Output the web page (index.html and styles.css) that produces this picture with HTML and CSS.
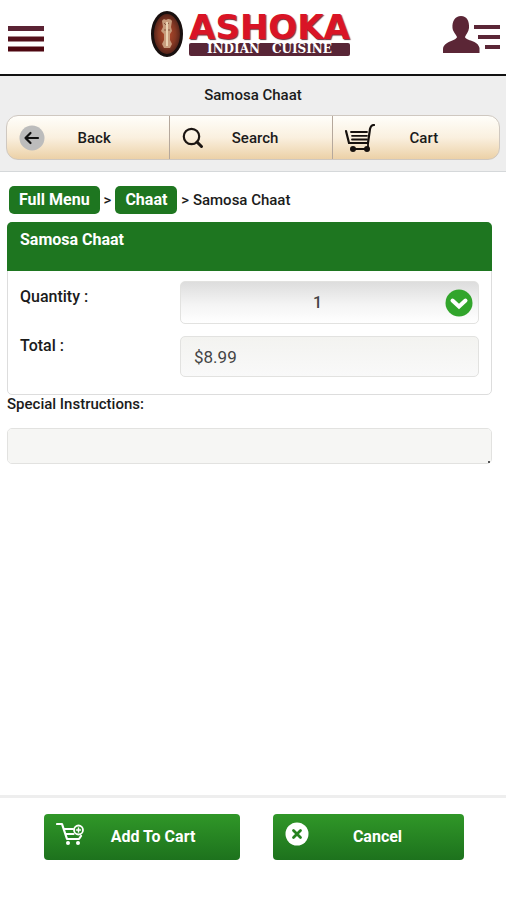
FILE: index.html
```html
<!DOCTYPE html>
<html lang="en">
<head>
<meta charset="utf-8">
<meta name="viewport" content="width=device-width, initial-scale=1">
<title>Samosa Chaat</title>
<link rel="stylesheet" href="styles.css">
</head>
<body>
<header class="site-header">
  <button class="icon-button" type="button" aria-label="Menu">
    <svg width="36" height="26" viewBox="0 0 36 26"><path fill="#5b2334" d="M0 0h36v5H0z"/><path fill="#54101b" d="M0 10.500h36v5H0z"/><path fill="#4e0710" d="M0 20.500h36v5H0z"/></svg>
  </button>
  <a class="logo" href="#">
    <svg class="logo-seal" width="32" height="46" viewBox="0 0 32 46" aria-hidden="true">
      <defs><radialGradient id="seal"><stop offset="0" stop-color="#b84b2c"/><stop offset=".6" stop-color="#853823"/><stop offset="1" stop-color="#4c2018"/></radialGradient></defs>
      <ellipse cx="16" cy="23" rx="14.500" ry="21.500" fill="url(#seal)" stroke="#19100f" stroke-width="3"/>
      <path fill="#c79b7c" d="M11 10c1-2 3-2 4-1 2-2 5-1 6 1l-1 6 1 4-2 3v6l2 4-2 4h-6l-2-4 2-4v-6l-3-3 2-4z"/>
      <path d="M13 12l2 2 3-2M13 19h6" fill="none" stroke="#85553f"/>
      <path d="M16 11v24" stroke="#ead2b2" stroke-width="2"/>
    </svg>
    <span class="logo-words">
      <span class="logo-name">ASHOKA</span>
      <span class="logo-tag"><span>INDIAN</span> <span>CUISINE</span></span>
    </span>
  </a>
  <button class="icon-button" type="button" aria-label="Account">
    <svg width="58" height="38" viewBox="0 0 58 38"><path fill="#5b2636" d="M18 0c6 0 8.500 5 8 12-.4 4-3 6-4 9 1 4 13 3 14.500 11V37H0v-4c1-8 13-8 14-12-1-3-4-5-4.500-9C9 5 12 0 18 0zM31 9h26v4H31zM35 19h22v4H35zM42 29h15v4H42z"/></svg>
  </button>
</header>

<section class="toolbar">
  <h1 class="page-title">Samosa Chaat</h1>
  <nav class="tabs">
    <a class="tab" href="#">
      <svg width="26" height="26" viewBox="0 0 26 26"><circle cx="13" cy="13" r="12.500" fill="#bcbcbc"/><path d="M19 13H6.500M11.500 8l-5 5 5 5" fill="none" stroke="#111" stroke-width="2.200" stroke-linecap="round" stroke-linejoin="round"/></svg>
      <span>Back</span>
    </a>
    <a class="tab" href="#">
      <svg width="22" height="22" viewBox="0 0 22 22"><circle cx="9.500" cy="9.500" r="7.700" fill="none" stroke="#1b1512" stroke-width="2.200"/><path d="M15 15l4.500 4.500" stroke="#1b1512" stroke-width="3" stroke-linecap="round"/></svg>
      <span>Search</span>
    </a>
    <a class="tab tab-cart" href="#">
      <svg width="30" height="28" viewBox="0 0 30 28"><g fill="none" stroke="#16110e" stroke-width="1.800" stroke-linecap="round"><path d="M1 7l3 12h19L25 5q1-4 4-4" stroke-width="2.200"/><path d="M6 8h16M7 11.800h15M7 15.500h15M23 19v6M8 25h14"/></g><circle cx="8" cy="25" r="3" fill="#16110e"/><circle cx="22" cy="25" r="3" fill="#16110e"/></svg>
      <span>Cart</span>
    </a>
  </nav>
</section>

<main class="content">
  <nav class="breadcrumb" aria-label="Breadcrumb">
    <a class="crumb" href="#">Full Menu</a>
    <span>&gt;</span>
    <a class="crumb" href="#">Chaat</a>
    <span>&gt; Samosa Chaat</span>
  </nav>
  <section class="panel">
    <h2 class="panel-title">Samosa Chaat</h2>
    <div class="fields">
      <label class="quantity-label" for="quantity">Quantity :</label>
      <div class="select-wrap">
        <select id="quantity"><option>1</option><option>2</option><option>3</option></select>
        <svg class="select-arrow" width="28" height="28" viewBox="0 0 28 28" aria-hidden="true"><circle cx="14" cy="14" r="13.500" fill="#32a52c"/><path d="M7.500 11.500l6.500 6 6.500-6" fill="none" stroke="#fff" stroke-width="4" stroke-linecap="round"/></svg>
      </div>
      <label for="total">Total :</label>
      <input id="total" type="text" value="$8.99" readonly>
    </div>
  </section>
  <label class="notes-label" for="notes">Special Instructions:</label>
  <div class="notes-wrap"><textarea id="notes" rows="1"></textarea></div>
</main>

<footer class="actions">
  <button class="action" type="button">
    <svg width="28" height="24" viewBox="0 0 28 24"><g fill="none" stroke="#fff" stroke-width="2.200" stroke-linecap="round" stroke-linejoin="round"><path d="M1 2h5l5 15h12l2-3M8 7h9M9.500 12h8"/><circle cx="22.500" cy="8" r="4.500" stroke-width="1.800"/><path d="M22.500 6v4M20.500 8h4" stroke-width="1.500"/></g><circle cx="12" cy="21" r="2" fill="#fff"/><circle cx="22" cy="21" r="2" fill="#fff"/></svg>
    <span>Add To Cart</span>
  </button>
  <button class="action" type="button">
    <svg width="24" height="24" viewBox="0 0 24 24"><circle cx="12" cy="12" r="11.500" fill="#fff"/><path d="M8.500 8.500l7 7M15.500 8.500l-7 7" stroke="#26821f" stroke-width="2.800" stroke-linecap="round"/></svg>
    <span>Cancel</span>
  </button>
</footer>
</body>
</html>
```
FILE: styles.css
```css
* { box-sizing: border-box; }

body {
  display: flex;
  flex-direction: column;
  min-height: 100vh;
  margin: 0;
  background: #fff;
  color: #1b1b1b;
  font: 500 15px/20px Roboto, "Liberation Sans", sans-serif;
}

a { color: inherit; text-decoration: none; }
h1, h2 { margin: 0; font: inherit; }
button { border: 0; padding: 0; font: inherit; cursor: pointer; }
svg { display: block; flex: none; }

.site-header {
  display: grid;
  grid-template-columns: 1fr auto 1fr;
  align-items: center;
  height: 76px;
  padding: 0 5px 4px 0;
  border-bottom: 2px solid #111;
}
.icon-button { background: none; justify-self: start; padding: 8px 0 0 8px; }
.icon-button:last-child { justify-self: end; padding: 0; }

.logo { display: flex; align-items: center; gap: 6px; padding-bottom: 3px; }
.logo-words { display: flex; flex-direction: column; align-items: center; }
.logo-name {
  color: #d91426;
  font: bold 34px/32px "DejaVu Sans", sans-serif;
  text-shadow: 1px 1px 1px #702b38;
}
.logo-tag {
  display: flex;
  justify-content: center;
  gap: 12px;
  align-self: stretch;
  border-radius: 2px;
  background: #582536;
  color: #fff;
  font: bold 12px/13px "DejaVu Serif", serif;
}

.toolbar {
  padding: 9px 6px 11px;
  border-bottom: 1px solid #d5d8da;
  background: #eee;
}
.page-title { text-align: center; }
.tabs {
  display: grid;
  grid-template-columns: 33% 33% 1fr;
  margin-top: 10px;
  border: 1px solid #cfc8c0;
  border-radius: 12px;
  background: linear-gradient(#fffefa, #faf0df 50%, #ecd1a7);
}
.tab {
  display: flex;
  align-items: center;
  height: 43px;
  padding: 0 12px;
}
.tab + .tab { border-left: 1px solid #b5a89c; }
.tab span { flex: 1; padding-right: 14px; text-align: center; }

.content { flex: 1; padding: 14px 14px 0 7px; }

.breadcrumb { display: flex; align-items: center; gap: 4px; padding-left: 2px; }
.crumb {
  padding: 4px 10px;
  border-radius: 5px;
  background: #1e7620;
  color: #fff;
  font-size: 16px;
  font-weight: 700;
}

.panel {
  margin-top: 8px;
  border: 1px solid #ddd;
  border-radius: 5px;
}
.panel-title {
  height: 49px;
  margin: -1px -1px 0;
  padding: 8px 13px;
  border-radius: 5px 5px 0 0;
  background: #1e7620;
  color: #fff;
  font-weight: 700;
  font-size: 16px;
}
.fields {
  display: grid;
  grid-template-columns: 160px 1fr;
  row-gap: 12px;
  padding: 10px 12px 17px;
  font-size: 16px;
}
.quantity-label { padding-top: 6px; }
.select-wrap { position: relative; }
select, input, textarea {
  display: block;
  width: 100%;
  border: 1px solid #e2e2e0;
  border-radius: 5px;
  color: #444;
  font: 400 16px/20px Roboto, "Liberation Sans", sans-serif;
}
select {
  appearance: none;
  height: 43px;
  padding: 0 48px 0 24px;
  background: linear-gradient(#ddd, #f4f4f4 55%, #fff);
  font-weight: 500;
  text-align: center;
  text-align-last: center;
}
.select-arrow { position: absolute; top: 8px; right: 6px; pointer-events: none; }
input {
  height: 41px;
  padding: 0 13px;
  background: linear-gradient(#f3f3f0, #f9f9f9);
  font-size: 17px;
}

.notes-label { display: block; line-height: 18px; }
.notes-wrap { position: relative; margin-top: 15px; }
.notes-wrap::after {
  content: "";
  position: absolute;
  right: 2px;
  bottom: 1px;
  width: 2px;
  height: 2px;
  background: #555;
}
textarea {
  height: 36px;
  padding: 8px;
  background: #f6f6f4;
  resize: none;
}

.actions {
  display: grid;
  grid-template-columns: 196fr 191fr;
  gap: 33px;
  padding: 16px 42px 40px 44px;
  border-top: 3px solid #eee;
}
.action {
  display: flex;
  align-items: center;
  height: 46px;
  padding: 0 12px;
  border-radius: 4px;
  background: linear-gradient(#309728, #1d721d);
  color: #fff;
  font-weight: 700;
  font-size: 16px;
}
.action svg { margin-bottom: 6px; }
.action span { flex: 1; padding-right: 6px; text-align: center; }
```
